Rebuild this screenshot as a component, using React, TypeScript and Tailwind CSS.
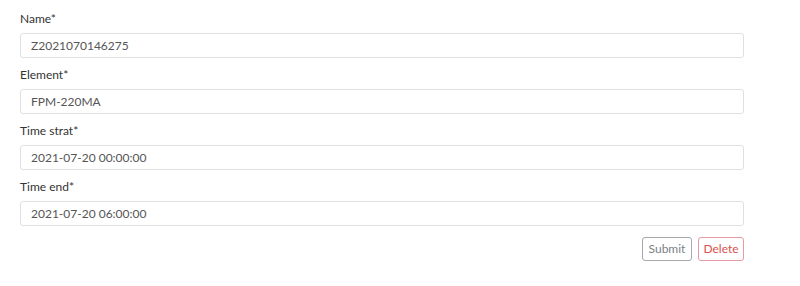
import React from 'react';

const fields = [
  { label: 'Name*', value: 'Z2021070146275' },
  { label: 'Element*', value: 'FPM-220MA' },
  { label: 'Time strat*', value: '2021-07-20 00:00:00' },
  { label: 'Time end*', value: '2021-07-20 06:00:00' },
];

export default function App() {
  return (
    <div
      className="h-[286px] w-[800px] bg-white pl-5 pr-14 pt-[11px] text-[12px]"
      style={{ fontFamily: 'Lato, "Open Sans", sans-serif' }}
    >
      <form className="flex flex-col">
        {fields.map((f) => (
          <div key={f.label} className="mb-[9px] flex flex-col">
            <label className="mb-[6px] leading-[16px] text-[#333]">{f.label}</label>
            <input
              readOnly
              value={f.value}
              className="h-[25px] w-full rounded-[3px] border border-[#e0e0e0] px-[10px] text-[12px] text-[#555] outline-none"
              style={{ fontFamily: 'Lato, sans-serif' }}
            />
          </div>
        ))}
        <div className="mt-[2px] flex justify-end gap-[6px]">
          <button
            type="button"
            className="h-[24px] w-[50px] rounded-[3px] border border-[#a4a9ae] text-[12px] text-[#7a7f85]"
          >
            Submit
          </button>
          <button
            type="button"
            className="h-[24px] w-[46px] rounded-[3px] border border-[#e79aa2] text-[12px] text-[#d9534f]"
          >
            Delete
          </button>
        </div>
      </form>
    </div>
  );
}
